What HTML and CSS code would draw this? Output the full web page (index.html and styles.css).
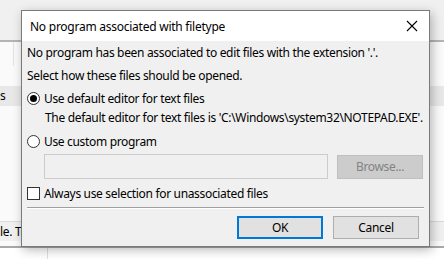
FILE: index.html
```html
<!DOCTYPE html>
<html lang="en">
<head>
    <meta charset="UTF-8">
    <title>No program associated with filetype</title>
    <link rel="stylesheet" href="styles.css">
</head>
<body>
    <!-- Application window behind the dialog -->
    <div class="app">
        <div class="toolbar"></div>
        <div class="workspace">
            <div class="pane-row">
                <div class="pane-sep"></div>
            </div>
            <div class="list-item selected">s</div>
            <div class="list-fill"></div>
            <div class="status">le. To</div>
            <div class="below">
                <div class="below-sep"></div>
            </div>
        </div>
    </div>

    <div class="dialog">
        <div class="titlebar">
            <span class="title">No program associated with filetype</span>
            <svg class="close" width="12" height="12" viewBox="0 0 12 12">
                <path d="M1 1 L11 11 M11 1 L1 11" stroke="#000" stroke-width="1.1" fill="none"/>
            </svg>
        </div>
        <div class="content">
            <p class="line first">No program has been associated to edit files with the extension '.'.</p>
            <p class="line">Select how these files should be opened.</p>
            <label class="option">
                <span class="radio checked"></span>
                Use default editor for text files
            </label>
            <p class="line indent">The default editor for text files is 'C:\Windows\system32\NOTEPAD.EXE'.</p>
            <label class="option second">
                <span class="radio"></span>
                Use custom program
            </label>
            <div class="program-row">
                <div class="textbox"></div>
                <div class="btn browse">Browse...</div>
            </div>
            <label class="option check-row">
                <span class="checkbox"></span>
                Always use selection for unassociated files
            </label>
            <div class="separator"></div>
            <div class="buttons">
                <div class="btn default">OK</div>
                <div class="btn">Cancel</div>
            </div>
        </div>
    </div>
</body>
</html>
```

FILE: styles.css
```css
:root {
    --face: #f0f0f0;
    --text: #000000;
    --border: #adadad;
    --accent: #0078d7;
}

* {
    margin: 0;
    padding: 0;
    box-sizing: border-box;
}

body {
    width: 444px;
    height: 259px;
    overflow: hidden;
    font-family: 'Noto Sans', 'Liberation Sans', sans-serif;
    font-size: 12px;
    color: var(--text);
    background: #ffffff;
    position: relative;
}

/* background window */
.app {
    display: flex;
    flex-direction: column;
    height: 100%;
}

.toolbar {
    height: 42px;
    background: #f0f0f0;
    border-bottom: 2px solid #b4b4b4;
}

.workspace {
    flex: 1;
    display: flex;
    flex-direction: column;
    background: #fafafa;
}

.pane-row {
    height: 44px;
    padding-left: 13px;
}

.pane-sep {
    width: 1px;
    height: 24px;
    background: #e3e3e3;
}

.list-item {
    height: 20px;
    line-height: 20px;
    font-size: 12px;
    letter-spacing: -0.3px;
}

.list-item.selected {
    background: #e8e8e8;
}

.list-fill {
    flex: 1;
}

.status {
    height: 20px;
    line-height: 20px;
    background: #f0f0f0;
    border-top: 1px solid #dadada;
    letter-spacing: -0.3px;
}

.below {
    height: 13px;
    border-top: 2px solid #a8a8a8;
    margin-top: 5px;
    background: #ffffff;
    padding-left: 47px;
}

.below-sep {
    width: 1px;
    height: 100%;
    background: #e0e0e0;
}

/* dialog */
.dialog {
    position: absolute;
    left: 21px;
    top: 10px;
    width: 409px;
    height: 237px;
    background: var(--face);
    border: 1px solid #7a7a7a;
    box-shadow: 2px 3px 10px rgba(0, 0, 0, 0.28);
    display: flex;
    flex-direction: column;
}

.titlebar {
    height: 30px;
    background: #ffffff;
    display: flex;
    align-items: center;
    justify-content: space-between;
    padding: 0 10px 0 8px;
}

.title {
    font-size: 12px;
    letter-spacing: -0.25px;
}

.close {
    margin-right: 1px;
}

.content {
    padding: 2px 5px 0 5px;
    display: flex;
    flex-direction: column;
    letter-spacing: -0.33px;
}

.line {
    height: 20px;
    line-height: 20px;
    white-space: nowrap;
}

.line + .line {
    margin-top: 3px;
}

.line.indent {
    padding-left: 18px;
}

.option {
    height: 20px;
    display: flex;
    align-items: center;
    gap: 4px;
    white-space: nowrap;
    margin-top: 2px;
}

.option.second {
    margin-top: 3px;
}

.radio {
    width: 13px;
    height: 13px;
    border: 1px solid #333333;
    border-radius: 50%;
    background: #ffffff;
    display: flex;
    align-items: center;
    justify-content: center;
}

.radio.checked::after {
    content: '';
    width: 7px;
    height: 7px;
    border-radius: 50%;
    background: #000000;
}

.program-row {
    display: flex;
    align-items: center;
    gap: 9px;
    margin-top: 3px;
    padding-left: 17px;
    padding-right: 1px;
}

.textbox {
    width: 284px;
    height: 25px;
    border: 1px solid #cccccc;
    background: var(--face);
}

.btn {
    width: 86px;
    height: 23px;
    border: 1px solid var(--border);
    background: #e1e1e1;
    display: flex;
    align-items: center;
    justify-content: center;
}

.btn.browse {
    height: 24px;
    background: #cccccc;
    border-color: #bfbfbf;
    color: #838383;
}

.check-row {
    margin-top: 4px;
}

.checkbox {
    width: 13px;
    height: 13px;
    border: 1px solid #333333;
    background: #ffffff;
}

.separator {
    height: 2px;
    margin-top: 4px;
    border-top: 1px solid #a0a0a0;
    border-bottom: 1px solid #ffffff;
}

.buttons {
    display: flex;
    justify-content: flex-end;
    gap: 10px;
    margin-top: 7px;
    padding-right: 5px;
}

.btn.default {
    border: 2px solid var(--accent);
}
```
